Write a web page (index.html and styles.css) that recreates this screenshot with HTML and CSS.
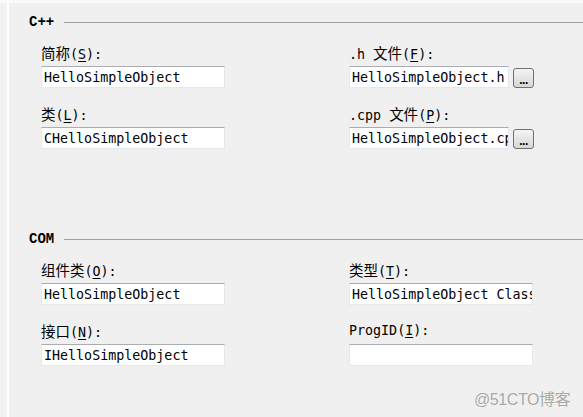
FILE: index.html
```html
<!DOCTYPE html>
<html>
<head>
<meta charset="utf-8">
<link rel="stylesheet" href="styles.css">
</head>
<body>
<div class="frame">
  <div class="strip"></div>
  <div class="panel">
    <section class="group group-cpp">
      <div class="group-head"><span class="group-title">C++</span><span class="rule"></span></div>
      <div class="fields">
        <div class="field">
          <div class="label"><span class="zh">简称</span>(<u>S</u>):</div>
          <div class="input w184">HelloSimpleObject</div>
        </div>
        <div class="field">
          <div class="label">.h <span class="zh">文件</span>(<u>F</u>):</div>
          <div class="row"><div class="input w160">HelloSimpleObject.h</div><div class="btn">...</div></div>
        </div>
        <div class="field">
          <div class="label"><span class="zh">类</span>(<u>L</u>):</div>
          <div class="input w184">CHelloSimpleObject</div>
        </div>
        <div class="field">
          <div class="label">.cpp <span class="zh">文件</span>(<u>P</u>):</div>
          <div class="row"><div class="input w160">HelloSimpleObject.cpp</div><div class="btn">...</div></div>
        </div>
      </div>
    </section>
    <section class="group">
      <div class="group-head"><span class="group-title">COM</span><span class="rule"></span></div>
      <div class="fields">
        <div class="field">
          <div class="label"><span class="zh">组件类</span>(<u>O</u>):</div>
          <div class="input w184">HelloSimpleObject</div>
        </div>
        <div class="field">
          <div class="label"><span class="zh">类型</span>(<u>T</u>):</div>
          <div class="input w184">HelloSimpleObject Class</div>
        </div>
        <div class="field">
          <div class="label"><span class="zh">接口</span>(<u>N</u>):</div>
          <div class="input w184">IHelloSimpleObject</div>
        </div>
        <div class="field">
          <div class="label">ProgID(<u>I</u>):</div>
          <div class="input w184"></div>
        </div>
      </div>
    </section>
  </div>
</div>
<div class="watermark">@51CTO博客</div>
</body>
</html>
```

FILE: styles.css
```css
html, body {
  margin: 0;
  padding: 0;
  width: 583px;
  height: 417px;
  overflow: hidden;
  background: #fafafa;
  font-family: "DejaVu Sans Mono", "Noto Sans CJK SC", monospace;
  font-size: 13.33px;
  color: #000;
}
.frame {
  display: flex;
  margin-top: 3px;
  height: 414px;
}
.strip {
  width: 7px;
  background: #f2f2f2;
  border-right: 2px solid #ffffff;
}
.panel {
  flex: 1;
  background: #f0f0f0;
  padding-top: 11px;
}
.group-cpp {
  margin-bottom: 82px;
}
.group-head {
  display: flex;
  align-items: center;
  height: 16px;
  padding-left: 20px;
}
.group-title {
  width: 35px;
  flex: none;
  font-family: "Liberation Mono", monospace;
  font-weight: bold;
  font-size: 14px;
}
.rule {
  flex: 1;
  height: 1px;
  background: #a0a0a0;
}
.fields {
  display: grid;
  grid-template-columns: 308px 1fr;
  row-gap: 16px;
  padding-left: 32px;
  margin-top: 13px;
}
.label {
  height: 20px;
  line-height: 20px;
  margin-bottom: 3px;
  white-space: nowrap;
}
.zh {
  font-family: "Noto Sans CJK SC", sans-serif;
  font-size: 14.5px;
}
u {
  text-decoration-thickness: 1px;
  text-underline-offset: 2px;
}
.row {
  display: flex;
  align-items: flex-end;
  gap: 4px;
}
.input {
  box-sizing: border-box;
  height: 22px;
  line-height: 20px;
  padding-top: 1px;
  background: #fff;
  border: 1px solid #e3e9ef;
  border-top-color: #abadb3;
  padding-left: 2px;
  white-space: nowrap;
  overflow: hidden;
}
.w184 { width: 184px; }
.w160 { width: 160px; }
.btn {
  box-sizing: border-box;
  width: 21px;
  height: 20px;
  border: 1px solid #707070;
  border-radius: 3px;
  background: linear-gradient(#f4f4f4, #d6d6d6);
  font-family: "Liberation Sans", sans-serif;
  font-weight: bold;
  font-size: 12px;
  line-height: 22px;
  text-align: center;
  letter-spacing: -0.5px;
}
.watermark {
  position: absolute;
  left: 474px;
  top: 386px;
  font-family: "Liberation Sans", "Noto Sans CJK SC", sans-serif;
  font-size: 16px;
  letter-spacing: -0.4px;
  color: #a8a8a8;
  text-shadow: 0 0 1px #fff;
}
```
